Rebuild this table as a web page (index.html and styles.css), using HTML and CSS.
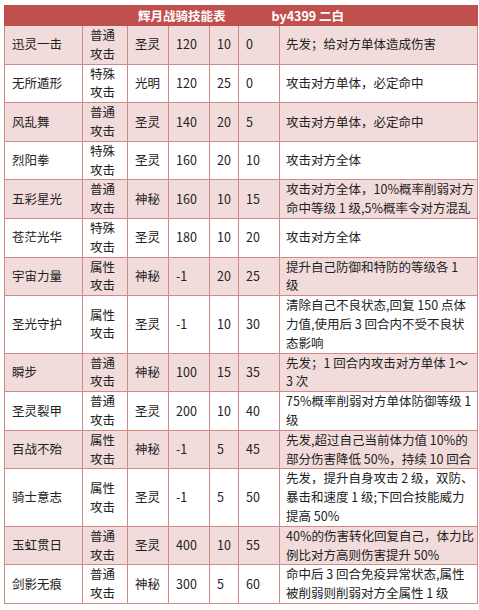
FILE: index.html
```html
<!DOCTYPE html>
<html lang="zh-CN">
<head>
<meta charset="utf-8">
<title>辉月战骑技能表</title>
<link rel="stylesheet" href="styles.css">
</head>
<body>
<table class="skills">
  <colgroup>
    <col class="c-name">
    <col class="c-type">
    <col class="c-attr">
    <col class="c-power">
    <col class="c-pp">
    <col class="c-lv">
    <col class="c-desc">
  </colgroup>
  <thead>
    <tr>
      <th colspan="7" class="title"><span>辉月战骑技能表</span><span class="author">by4399 二白</span></th>
    </tr>
  </thead>
  <tbody>
    <tr class="pink"><td>迅灵一击</td><td>普通<br>攻击</td><td>圣灵</td><td>120</td><td>10</td><td>0</td><td class="desc">先发；给对方单体造成伤害</td></tr>
    <tr><td>无所遁形</td><td>特殊<br>攻击</td><td>光明</td><td>120</td><td>25</td><td>0</td><td class="desc">攻击对方单体，必定命中</td></tr>
    <tr class="pink"><td>风乱舞</td><td>普通<br>攻击</td><td>圣灵</td><td>140</td><td>20</td><td>5</td><td class="desc">攻击对方单体，必定命中</td></tr>
    <tr><td>烈阳拳</td><td>特殊<br>攻击</td><td>圣灵</td><td>160</td><td>20</td><td>10</td><td class="desc">攻击对方全体</td></tr>
    <tr class="pink"><td>五彩星光</td><td>普通<br>攻击</td><td>神秘</td><td>160</td><td>10</td><td>15</td><td class="desc">攻击对方全体，10%概率削弱对方<br>命中等级 1 级,5%概率令对方混乱</td></tr>
    <tr><td>苍茫光华</td><td>特殊<br>攻击</td><td>圣灵</td><td>180</td><td>10</td><td>20</td><td class="desc">攻击对方全体</td></tr>
    <tr class="pink"><td>宇宙力量</td><td>属性<br>攻击</td><td>神秘</td><td>-1</td><td>20</td><td>25</td><td class="desc">提升自己防御和特防的等级各 1<br>级</td></tr>
    <tr><td>圣光守护</td><td>属性<br>攻击</td><td>圣灵</td><td>-1</td><td>10</td><td>30</td><td class="desc">清除自己不良状态,回复 150 点体<br>力值,使用后 3 回合内不受不良状<br>态影响</td></tr>
    <tr class="pink"><td>瞬步</td><td>普通<br>攻击</td><td>神秘</td><td>100</td><td>15</td><td>35</td><td class="desc">先发；1 回合内攻击对方单体 1～<br>3 次</td></tr>
    <tr><td>圣灵裂甲</td><td>普通<br>攻击</td><td>圣灵</td><td>200</td><td>10</td><td>40</td><td class="desc">75%概率削弱对方单体防御等级 1<br>级</td></tr>
    <tr class="pink"><td>百战不殆</td><td>属性<br>攻击</td><td>神秘</td><td>-1</td><td>5</td><td>45</td><td class="desc">先发,超过自己当前体力值 10%的<br>部分伤害降低 50%，持续 10 回合</td></tr>
    <tr><td>骑士意志</td><td>属性<br>攻击</td><td>圣灵</td><td>-1</td><td>5</td><td>50</td><td class="desc">先发，提升自身攻击 2 级，双防、<br>暴击和速度 1 级;下回合技能威力<br>提高 50%</td></tr>
    <tr class="pink"><td>玉虹贯日</td><td>普通<br>攻击</td><td>圣灵</td><td>400</td><td>10</td><td>55</td><td class="desc">40%的伤害转化回复自己，体力比<br>例比对方高则伤害提升 50%</td></tr>
    <tr><td>剑影无痕</td><td>普通<br>攻击</td><td>神秘</td><td>300</td><td>5</td><td>60</td><td class="desc">命中后 3 回合免疫异常状态,属性<br>被削弱则削弱对方全属性 1 级</td></tr>
  </tbody>
</table>
</body>
</html>
```

FILE: styles.css
```css
html, body {
  margin: 0;
  padding: 0;
  background: #ffffff;
}

body {
  padding: 5px 0 0 4px;
  font-family: "Noto Sans CJK SC", "Noto Sans", sans-serif;
  font-size: 12.5px;
  color: #222222;
}

.skills {
  border-collapse: collapse;
  table-layout: fixed;
  width: 473px;
  border: 1px solid #cf8987;
}

.c-name { width: 78px; }
.c-type { width: 45px; }
.c-attr { width: 41px; }
.c-power { width: 41px; }
.c-pp { width: 29px; }
.c-lv { width: 41px; }
.c-desc { width: 198px; }

.skills th.title {
  background: #c0504d;
  color: #ffffff;
  font-weight: bold;
  height: 19px;
  padding: 0;
  line-height: 19px;
  text-align: center;
  border: 1px solid #c0504d;
  white-space: nowrap;
}

.title .author {
  margin-left: 46px;
}

.skills td {
  border: 1px solid #cf8987;
  padding: 0 0 0 7px;
  line-height: 18.8px;
  vertical-align: middle;
  white-space: nowrap;
  overflow: hidden;
}

.skills td.desc {
  padding-left: 6px;
}

.skills tr.pink td {
  background: #f2dcdb;
}
```
